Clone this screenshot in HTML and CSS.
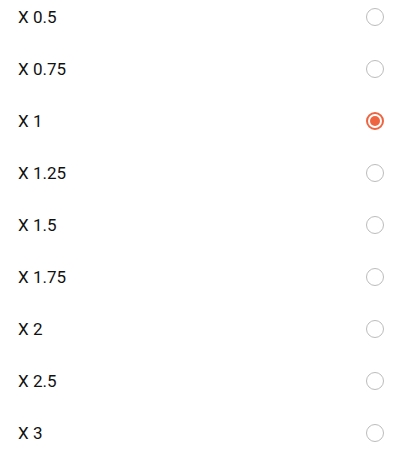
FILE: index.html
```html
<!DOCTYPE html>
<html>
<head>
<meta charset="utf-8">
<link rel="stylesheet" href="styles.css">
</head>
<body>
<ul class="list">
  <li class="row"><span class="label">X 0.5</span><span class="radio"></span></li>
  <li class="row"><span class="label">X 0.75</span><span class="radio"></span></li>
  <li class="row"><span class="label">X 1</span><span class="radio checked"></span></li>
  <li class="row"><span class="label">X 1.25</span><span class="radio"></span></li>
  <li class="row"><span class="label">X 1.5</span><span class="radio"></span></li>
  <li class="row"><span class="label">X 1.75</span><span class="radio"></span></li>
  <li class="row"><span class="label">X 2</span><span class="radio"></span></li>
  <li class="row"><span class="label">X 2.5</span><span class="radio"></span></li>
  <li class="row"><span class="label">X 3</span><span class="radio"></span></li>
</ul>
</body>
</html>
```
FILE: styles.css
```css
html, body {
  margin: 0;
  padding: 0;
  background: #ffffff;
  overflow: hidden;
}
body {
  font-family: Roboto, "Noto Sans", sans-serif;
  color: #111111;
}
.list {
  list-style: none;
  margin: -9px 0 0 0;
  padding: 0;
}
.row {
  height: 52px;
  display: flex;
  align-items: center;
  justify-content: space-between;
  padding: 0 26px 0 18px;
}
.label {
  font-size: 17px;
  line-height: 20px;
}
.radio {
  box-sizing: border-box;
  width: 18px;
  height: 18px;
  border: 1.5px solid #bcbcbc;
  border-radius: 50%;
  display: flex;
  align-items: center;
  justify-content: center;
}
.radio.checked {
  border: 2px solid #ef6440;
}
.radio.checked::after {
  content: "";
  width: 10px;
  height: 10px;
  border-radius: 50%;
  background: #ef6440;
}
```
